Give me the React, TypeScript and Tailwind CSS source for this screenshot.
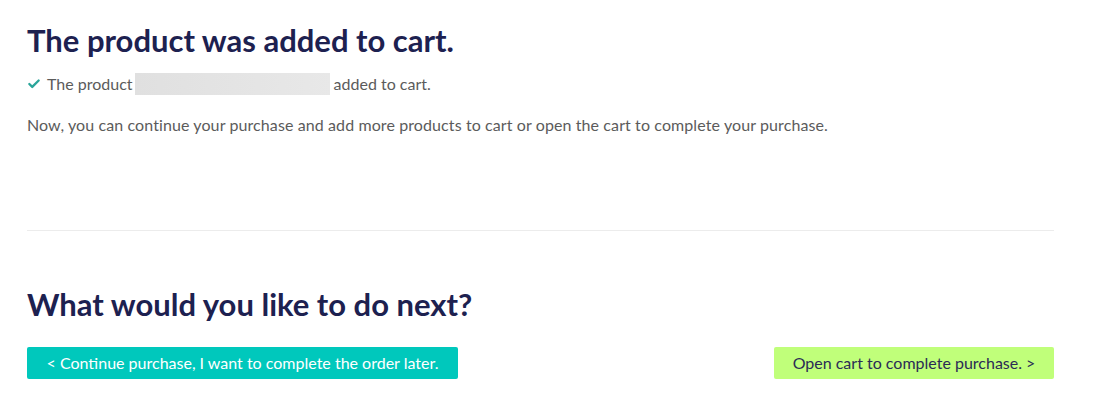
import { Check } from "lucide-react";

export default function App() {
  return (
    <div className="min-h-screen bg-white font-['Lato','Liberation_Sans',sans-serif] text-[#5b5b5b]">
      <div className="ml-[27px] mr-[39px] pt-[20px]">
        <h1 className="text-[31px] leading-[40px] font-bold text-[#1d2150]">The product was added to cart.</h1>

        <div className="mt-[13px] flex items-center h-[22px] text-[16px]">
          <Check className="w-[14px] h-[14px] text-[#2aa59a] mr-[6px]" strokeWidth={4} />
          <span>The product</span>
          <span className="ml-[2px] mr-[4px] h-[22px] w-[195px] bg-gradient-to-r from-[#e0e0e0] to-[#e8e8e8]" />
          <span>added to cart.</span>
        </div>

        <p className="mt-[19px] text-[16px] leading-[22px] tracking-[0.1px]">
          Now, you can continue your purchase and add more products to cart or open the cart to complete your purchase.
        </p>

        <hr className="mt-[94px] border-t border-[#ececec]" />

        <h2 className="mt-[53px] text-[31px] leading-[40px] font-bold text-[#1d2150]">What would you like to do next?</h2>

        <div className="mt-[23px] flex justify-between">
          <button className="h-[32px] w-[431px] rounded-[2px] bg-[#00c8bc] text-[16px] text-white">
            &lt; Continue purchase, I want to complete the order later.
          </button>
          <button className="h-[32px] w-[280px] rounded-[2px] bg-[#c0ff7a] text-[16px] text-[#2b2b55]">
            Open cart to complete purchase. &gt;
          </button>
        </div>
      </div>
    </div>
  );
}
